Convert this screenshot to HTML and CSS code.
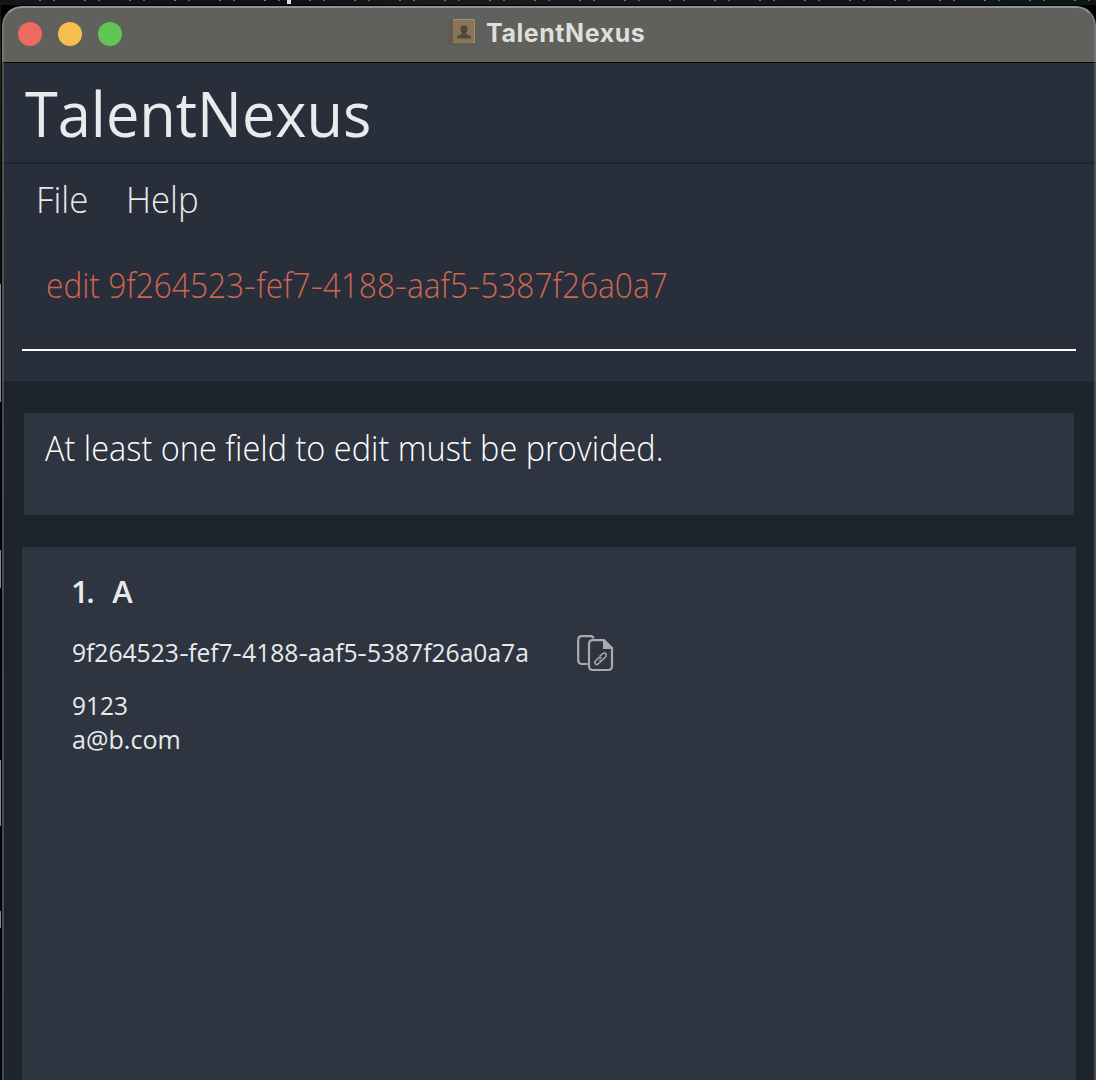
FILE: index.html
```html
<!DOCTYPE html>
<html lang="en">
<head>
<meta charset="utf-8">
<title>TalentNexus</title>
<link rel="stylesheet" href="styles.css">
</head>
<body>
<div class="window">
  <div class="titlebar">
    <div class="lights"><span class="light close"></span><span class="light minimize"></span><span class="light maximize"></span></div>
    <div class="caption">
      <svg class="book" width="28" height="26" viewBox="0 0 28 26">
        <rect x=".5" y="1" width="27" height="25" rx="1.5" fill="#595650"/>
        <rect x="1" y="0" width="4" height="25" fill="#625a51"/>
        <rect x="5" y="0" width="22" height="24.5" fill="#897557"/>
        <path d="M5 .5H26.500V24" fill="none" stroke="#a19172"/>
        <path d="M9 19.500V17.500Q10 16 14 15C13.500 13 12.500 12 12.500 9.500Q12.500 6.500 16 6.500T19.500 9.500C19.500 12 18.500 13 18 15Q22 16 23 17.500V19.500Z" fill="#51483c"/>
      </svg>
      <span class="caption-text">TalentNexus</span>
    </div>
  </div>
  <header class="brand"><span class="brand-text">TalentNexus</span></header>
  <nav class="menu"><span class="file">File</span><span class="help">Help</span></nav>
  <div class="command"><div class="command-field"><span class="command-text">edit 9f264523<span class="dash">-</span>fef7<span class="dash">-</span>4188<span class="dash">-</span>aaf5<span class="dash">-</span>5387f26a0a7</span></div></div>
  <main class="content">
    <section class="result"><span class="result-text">At least one field to edit must be provided.</span></section>
    <section class="people">
      <article class="person">
        <div class="name"><span class="index">1.</span><span>A</span></div>
        <div class="identity">
          <span class="uuid">9f264523<span class="dash">-</span>fef7<span class="dash">-</span>4188<span class="dash">-</span>aaf5<span class="dash">-</span>5387f26a0a7a</span>
          <svg class="copy" width="37" height="37" viewBox="0 0 37 37" fill="none" stroke="#a8abae" stroke-width="2.2">
            <path d="M10.500 29H5Q1.200 29 1.200 25V5.500Q1.200 1.200 5 1.200H14.500L17 3"/>
            <path d="M12 9.500Q12 5.200 16 5.200H27L35 13V31Q35 35 31 35H16Q12 35 12 31Z"/>
            <path d="M26 5.200H28L35.500 13V14H26Z" fill="#a8abae" stroke="none"/>
            <path d="M22.500 21.500L26 18.500Q28 17.500 29 19T28 22.500L25.500 25Q23.500 26.500 22.500 25M24.500 23.500Q23 21.500 21 23.500L18.500 26Q17 28 18.500 29.200T21.500 28.500L24 26.500" stroke-width="1.5"/>
          </svg>
        </div>
        <div class="detail"><span class="phone">9123</span></div>
        <div class="detail"><span class="email">a@b.com</span></div>
      </article>
    </section>
  </main>
</div>
</body>
</html>
```
FILE: styles.css
```css
* { box-sizing: border-box; }
body {
  margin: 0;
  width: 1096px;
  height: 1080px;
  padding: 6px 0 0 2px;
  overflow: hidden;
  white-space: nowrap;
  font-family: "Open Sans", "Noto Sans", sans-serif;
  color: #e9eaec;
  background:
    linear-gradient(90deg, #ddd 0 4px, transparent 4px) 287px 0 / 4px 4px no-repeat,
    repeating-linear-gradient(90deg, transparent 0 29px, #777 29px 31px, transparent 31px 43px, #666 43px 45px) 10px 0 / 1086px 1px no-repeat,
    linear-gradient(#858789, #858789) 0 284px / 1px 118px no-repeat,
    linear-gradient(#858789, #858789) 0 550px / 1px 38px no-repeat,
    linear-gradient(#858789, #858789) 0 760px / 1px 66px no-repeat,
    linear-gradient(#858789, #858789) 0 911px / 1px 17px no-repeat,
    linear-gradient(90deg, #14171a, #0d1014 25%, #191b1b 40%, #10131c 80%, #0b1814) 0 0 / 100% 5px no-repeat,
    linear-gradient(#100c07, #3b290e 5%, #130d04 20%, #070500 50%, #0c0903) 0 0 / 1px 100% no-repeat,
    #000;
}
.window {
  position: relative;
  height: 1074px;
  display: flex;
  flex-direction: column;
  border-radius: 20px 20px 0 0;
  overflow: hidden;
  background: #1d242b;
}
.window::after {
  content: "";
  position: absolute;
  inset: 0;
  border: 2px solid rgba(160, 180, 190, .28);
  border-top-color: rgba(255, 255, 255, .32);
  border-bottom: 0;
  border-radius: 20px 20px 0 0;
}
.titlebar {
  flex: none;
  display: grid;
  grid-template-columns: 446px auto;
  height: 57px;
  background: #60605d;
  border-bottom: 1px solid #000;
}
.lights { display: flex; gap: 16px; padding: 16px 0 0 16px; }
.light { width: 24px; height: 24px; border-radius: 50%; }
.close { background: #ed6a5e; }
.minimize { background: #f5bf4f; }
.maximize { background: #61c554; }
.caption { display: flex; gap: 10px; padding-top: 13px; }
.caption-text {
  font: 700 25px/28px Inter, sans-serif;
  letter-spacing: .55px;
  color: #dededc;
}

/* Narrowed faces: each run is condensed from its left edge */
.brand-text, .file, .help, .command-text, .result-text, .uuid, .phone, .email {
  display: inline-block;
  transform-origin: 0 50%;
}
.brand-text { transform: scaleX(.945); }
.file, .help { transform: scaleX(.94); }
.command-text { transform: scaleX(.904); }
.result-text { transform: scaleX(.929); }
.uuid { transform: scaleX(.947); }
.phone { transform: scaleX(.94); }
.email { transform: scaleX(.965); }
.dash { display: inline-block; margin: 0 .03em; transform: scaleX(1.2); }

.brand {
  flex: none;
  height: 101px;
  padding: 1px 0 0 23px;
  background: #282e3a;
  border-bottom: 2px solid #1e252d;
  font-size: 63px;
  line-height: 97px;
}
.menu {
  flex: none;
  display: flex;
  height: 69px;
  padding-left: 34px;
  gap: 34px;
  background: #282e3a;
  font-size: 37px;
  font-weight: 300;
  line-height: 70px;
}
.command {
  flex: none;
  height: 148px;
  padding: 0 20px;
  background: #282e3a;
}
.command-field {
  height: 118px;
  padding: 1px 0 0 24px;
  border-bottom: 2px solid #fff;
  font-size: 35px;
  font-weight: 300;
  line-height: 101px;
  color: #d06651;
}
.content {
  flex: 1;
  display: flex;
  flex-direction: column;
  gap: 32px;
  padding: 32px 20px 0;
}
.result {
  height: 102px;
  margin: 0 2px;
  padding: 1px 0 0 21px;
  background: #2e3440;
  font-size: 35px;
  font-weight: 300;
  line-height: 67px;
  color: #fff;
}
.people { flex: 1; background: #2c3640; }
.person {
  height: 280px;
  padding: 22px 0 0 50px;
  background: #2e3440;
}
.name {
  display: flex;
  gap: 20px;
  height: 44px;
  font-size: 31px;
  font-weight: 600;
  line-height: 44px;
}
.index { margin-left: -1px; letter-spacing: -2.5px; }
.identity {
  display: grid;
  grid-template-columns: 504px 37px;
  height: 75px;
  padding: 3px 0 0;
  font-size: 26px;
  line-height: 72px;
}
.uuid { justify-self: start; }
.copy { margin: 19px 0 0 1px; }
.detail { height: 34px; font-size: 26px; line-height: 34px; }
```
